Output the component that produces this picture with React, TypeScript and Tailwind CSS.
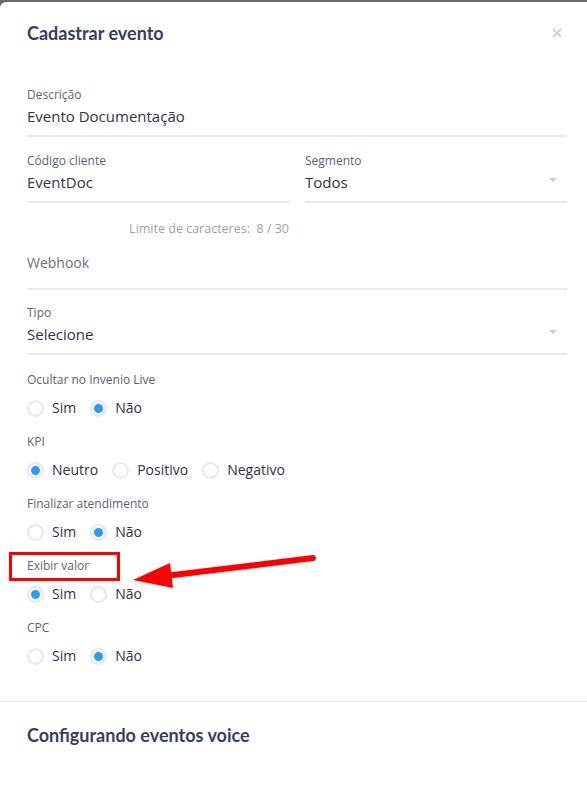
import React from "react";

const fieldLabel = "block text-[12px] leading-4 text-[#5b6275]";
const fieldValue = "block text-[15px] leading-[22px] text-[#2d3448]";

const Caret = () => (
  <svg width="8" height="5" viewBox="0 0 8 5" className="absolute right-[10px] top-[25px]">
    <path d="M0 0h8L4 4z" fill="#c3c6cf" />
  </svg>
);

const Radio = ({ label, checked }: { label: string; checked?: boolean }) => (
  <label className="flex items-center gap-2 mr-[14px]">
    <span className="flex h-[17px] w-[17px] items-center justify-center rounded-full border-2 border-[#e6e8ee] bg-white">
      {checked && <span className="h-[9px] w-[9px] rounded-full bg-[#2d9bf4]" />}
    </span>
    <span className="text-[14px] leading-5 text-[#2d3448]">{label}</span>
  </label>
);

const RadioGroup = ({ title, options, value }: { title: string; options: string[]; value: string }) => (
  <div>
    <span className={fieldLabel}>{title}</span>
    <div className="mt-[10px] flex h-5 items-center">
      {options.map((o) => (
        <Radio key={o} label={o} checked={o === value} />
      ))}
    </div>
  </div>
);

export default function App() {
  return (
    <div className="min-h-[795px] bg-[#6b6b6b] pt-[2px]" style={{ fontFamily: '"Open Sans", sans-serif' }}>
      <div className="relative min-h-[793px] rounded-tl-md bg-white">
        {/* header */}
        <div className="flex items-center justify-between pl-[27px] pr-[20px] pt-[19px]">
          <h1 className="text-[18px] font-bold leading-6 text-[#363f5e]" style={{ fontFamily: "Lato, sans-serif" }}>
            Cadastrar evento
          </h1>
          <svg width="10" height="10" viewBox="0 0 10 10" className="mr-[5px]">
            <path d="M1 1l8 8M9 1l-8 8" stroke="#c4c7d0" strokeWidth="1.6" />
          </svg>
        </div>

        {/* body */}
        <div className="pl-[27px] pr-[20px] pt-[42px] pb-[35px]">
          <div className="border-b-2 border-[#e8e9ef] pb-2">
            <span className={fieldLabel}>Descrição</span>
            <span className={`${fieldValue} mt-[2px]`}>Evento Documentação</span>
          </div>

          <div className="mt-4 grid grid-cols-2 gap-4">
            <div>
              <div className="border-b-2 border-[#e8e9ef] pb-2">
                <span className={fieldLabel}>Código cliente</span>
                <span className={`${fieldValue} mt-[2px]`}>EventDoc</span>
              </div>
              <p className="mt-[18px] text-right text-[12.5px] leading-4 text-[#9aa0ad]">
                Limite de caracteres:&nbsp; 8 / 30
              </p>
            </div>
            <div className="relative self-start border-b-2 border-[#e8e9ef] pb-2">
              <span className={fieldLabel}>Segmento</span>
              <span className={`${fieldValue} mt-[2px]`}>Todos</span>
              <Caret />
            </div>
          </div>

          <div className="mt-[15px] border-b-2 border-[#e8e9ef] pb-[14px]">
            <span className="block text-[14px] leading-[22px] text-[#6b7080]">Webhook</span>
          </div>

          <div className="relative mt-[15px] border-b-2 border-[#e8e9ef] pb-2">
            <span className={fieldLabel}>Tipo</span>
            <span className={`${fieldValue} mt-[2px]`}>Selecione</span>
            <Caret />
          </div>

          <div className="mt-[17px] flex flex-col gap-4">
            <RadioGroup title="Ocultar no Invenio Live" options={["Sim", "Não"]} value="Não" />
            <RadioGroup title="KPI" options={["Neutro", "Positivo", "Negativo"]} value="Neutro" />
            <RadioGroup title="Finalizar atendimento" options={["Sim", "Não"]} value="Não" />
            <RadioGroup title="Exibir valor" options={["Sim", "Não"]} value="Sim" />
            <RadioGroup title="CPC" options={["Sim", "Não"]} value="Não" />
          </div>
        </div>

        {/* second section */}
        <div className="border-t border-[#e8e8ea] px-[27px] pt-[21px]">
          <h2 className="text-[18px] font-bold leading-6 text-[#363f5e]" style={{ fontFamily: "Lato, sans-serif" }}>
            Configurando eventos voice
          </h2>
        </div>

        {/* annotation overlay */}
        <div className="absolute left-[9px] top-[550px] h-[29px] w-[111px] border-[3px] border-[#ff0000]" />
        <svg className="absolute left-0 top-0" width="587" height="795" viewBox="0 0 587 795">
          <path d="M313 556L165 574" stroke="#ff0000" strokeWidth="6" strokeLinecap="round" />
          <path d="M133 578L170 561L173 586Z" fill="#ff0000" />
        </svg>
      </div>
    </div>
  );
}
